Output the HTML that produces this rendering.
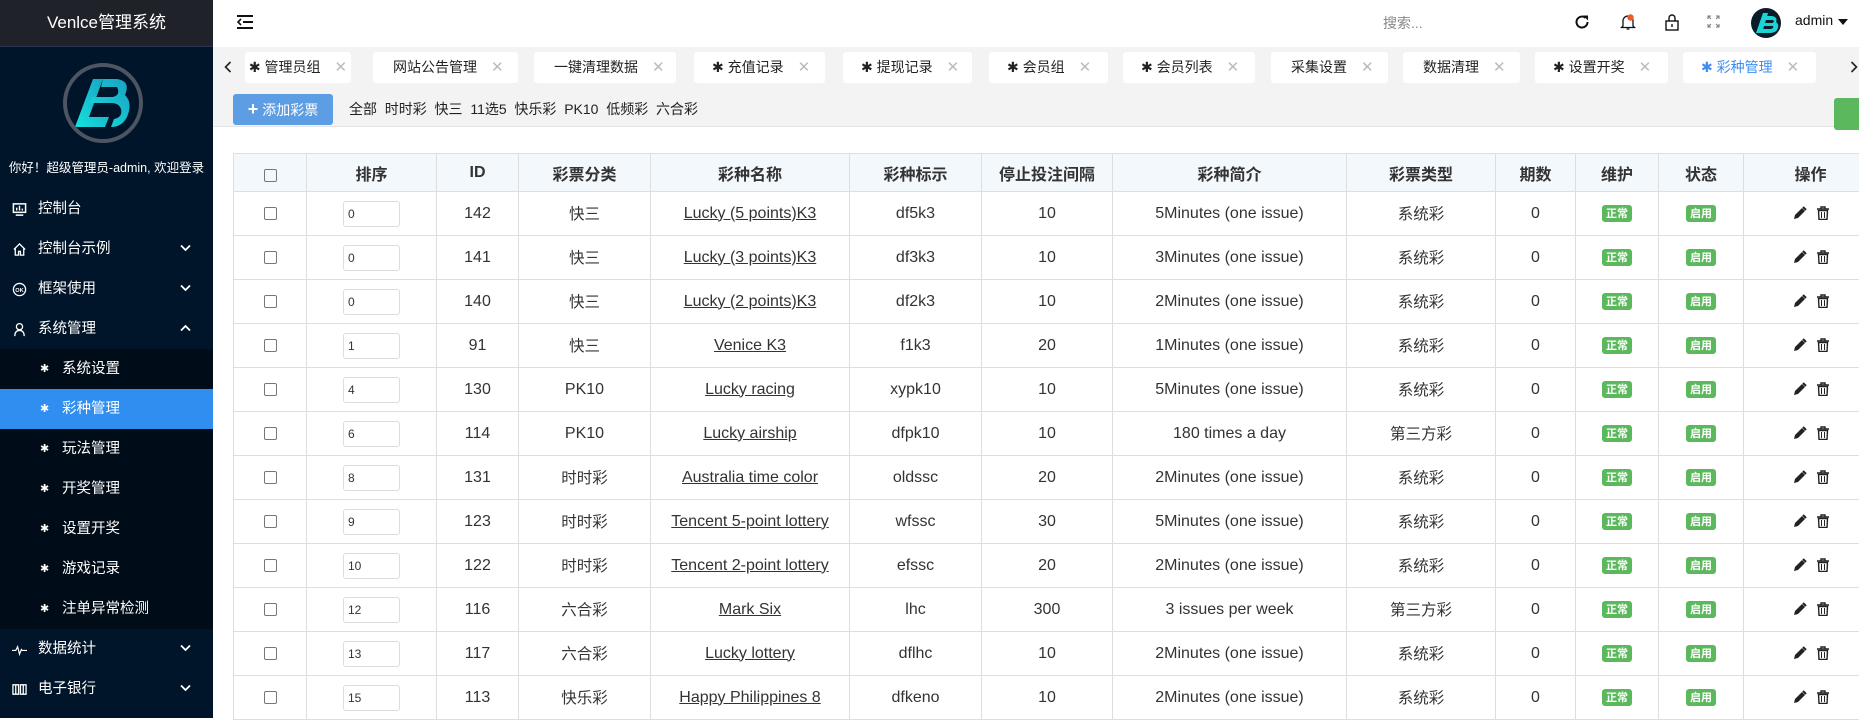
<!DOCTYPE html>
<html><head><meta charset="utf-8">
<style>
*{box-sizing:border-box;margin:0;padding:0}
body{width:1859px;height:718px;overflow:hidden;position:relative;font-family:"Liberation Sans","Noto Sans CJK SC",sans-serif;color:#333;background:#fff}
.side{position:absolute;left:0;top:0;width:213px;height:718px;background:#001529;color:#fff}
.side .hd{height:47px;background:#20222a;border-bottom:1px solid #2b3550;text-align:center;line-height:46px;font-size:17px}
.logo{position:absolute;left:63px;top:63px;width:80px;height:80px;border-radius:50%;border:4px solid #4b5563;background:#001529;overflow:hidden}
.welcome{position:absolute;left:0;width:213px;top:157px;text-align:center;font-size:12.5px}
.menu{position:absolute;top:189px;left:0;width:213px}
.mi{height:40px;line-height:40px;font-size:14.5px;padding-left:38px;position:relative}
.mi .ic{position:absolute;left:12px;top:13px;width:15px;height:15px}
.mi .ar{position:absolute;right:22px;top:15px;width:11px;height:8px}
.sub{background:#000c17}
.si{height:40px;line-height:40px;font-size:14.5px;padding-left:62px;position:relative}
.si:before{content:"✱";position:absolute;left:40px;top:0;font-size:11px}
.si.act{background:#2f8ef0}
.top{position:absolute;left:213px;top:0;right:0;height:47px;background:#fff}
.tabs{position:absolute;left:213px;top:47px;right:0;height:80px;background:#f3f3f3;border-bottom:1px solid #e3e3e3}
.tab{position:absolute;top:5px;height:31px;background:#fff;border-radius:3px;font-size:14px;line-height:31px;color:#222;white-space:nowrap}
.tab .x{color:#bbb;margin-left:14px;font-size:15px}
.btn{position:absolute;left:20px;top:47px;width:100px;height:31px;background:#5d9de3;color:#fff;border-radius:3px;font-size:14px;line-height:31px;text-align:center}
.flt{position:absolute;left:136px;top:47px;line-height:31px;font-size:14px;color:#222}
table{position:absolute;left:233px;top:153px;border-collapse:collapse;table-layout:fixed;width:1644px}
th,td{border:1px solid #dedede;text-align:center;font-size:16px;white-space:nowrap;overflow:hidden}
th{background:#f3f8fd;height:38px;font-weight:bold;color:#333;font-family:"Noto Sans CJK SC",sans-serif}
th.l{font-family:"Liberation Sans",sans-serif}
td{height:44px;color:#333}
td.c{font-family:"Noto Sans CJK SC",sans-serif;font-size:15.5px}
td.c span{position:relative;top:-1px}
td a{color:#333;text-decoration:underline}
.cb{display:inline-block;width:13px;height:13px;border:1px solid #777;border-radius:2px;vertical-align:middle}
.inp{display:inline-block;width:57px;height:26px;border:1px solid #ddd;border-radius:3px;text-align:left;padding-left:4px;font-size:12px;line-height:24px;vertical-align:middle}
.bd{display:inline-block;background:#5cb85c;color:#fff;font-size:11px;font-weight:bold;padding:0 4px;height:17px;line-height:17px;border-radius:3px;vertical-align:middle;font-family:"Noto Sans CJK SC",sans-serif}
</style></head><body>
<div class="side">
 <div class="hd">Venlce管理系统</div>
 <div class="logo"><svg width="72" height="72" viewBox="0 0 72 72"><defs><linearGradient id="g" x1="0" y1="1" x2="1" y2="0"><stop offset="0" stop-color="#14e3e0"/><stop offset="1" stop-color="#1b9fbf"/></linearGradient></defs><path d="M8 60 L26 12 L36 12 L22 50 L42 50 L38 60 Z" fill="url(#g)"/><path d="M22 36 L26 30 L46 30 Q54 28 50 20 L34 20 L36 12 H50 Q64 14 58 28 Q66 36 60 50 Q55 60 44 60 L47 52 Q56 50 54 42 Q52 36 44 36 Z" fill="url(#g)"/></svg></div>
 <div class="welcome">你好！超级管理员-admin, 欢迎登录</div>
 <div class="menu">
  <div class="mi"><svg class="ic" viewBox="0 0 16 16"><rect x="1.5" y="2" width="13" height="9" fill="none" stroke="#fff" stroke-width="1.6"/><path d="M5 9V6M8 9V4M11 9V7M4 14h8" stroke="#fff" stroke-width="1.5"/></svg>控制台</div>
  <div class="mi"><svg class="ic" viewBox="0 0 16 16"><path d="M2 8L8 2l6 6M3.5 7v7h3.5v-4h2v4h3.5V7" fill="none" stroke="#fff" stroke-width="1.4"/></svg>控制台示例<svg class="ar" viewBox="0 0 11 8"><path d="M1 1.5l4.5 4.5 4.5-4.5" fill="none" stroke="#fff" stroke-width="1.8"/></svg></div>
  <div class="mi"><svg class="ic" viewBox="0 0 16 16"><circle cx="8" cy="8" r="6.5" fill="none" stroke="#fff" stroke-width="1.4"/><text x="8" y="10.5" font-size="6" fill="#fff" text-anchor="middle" font-weight="bold" font-family="Liberation Sans">OK</text></svg>框架使用<svg class="ar" viewBox="0 0 11 8"><path d="M1 1.5l4.5 4.5 4.5-4.5" fill="none" stroke="#fff" stroke-width="1.8"/></svg></div>
  <div class="mi"><svg class="ic" viewBox="0 0 16 16"><circle cx="8" cy="5" r="3.3" fill="none" stroke="#fff" stroke-width="1.4"/><path d="M3 15c0-4 2-6 5-6s5 2 5 6" fill="none" stroke="#fff" stroke-width="1.4"/></svg>系统管理<svg class="ar" viewBox="0 0 11 8"><path d="M1 6.5l4.5-4.5 4.5 4.5" fill="none" stroke="#fff" stroke-width="1.8"/></svg></div>
  <div class="sub">
   <div class="si">系统设置</div>
   <div class="si act">彩种管理</div>
   <div class="si">玩法管理</div>
   <div class="si">开奖管理</div>
   <div class="si">设置开奖</div>
   <div class="si">游戏记录</div>
   <div class="si">注单异常检测</div>
  </div>
  <div class="mi"><svg class="ic" viewBox="0 0 16 16"><path d="M0 9h4l2-4 2 8 2-5 1 1h5" fill="none" stroke="#fff" stroke-width="1.3"/></svg>数据统计<svg class="ar" viewBox="0 0 11 8"><path d="M1 1.5l4.5 4.5 4.5-4.5" fill="none" stroke="#fff" stroke-width="1.8"/></svg></div>
  <div class="mi"><svg class="ic" viewBox="0 0 16 16"><path d="M1 3h6v10H1zM9 3h6v10H9zM4 3v10M12 3v10" fill="none" stroke="#fff" stroke-width="1.4"/></svg>电子银行<svg class="ar" viewBox="0 0 11 8"><path d="M1 1.5l4.5 4.5 4.5-4.5" fill="none" stroke="#fff" stroke-width="1.8"/></svg></div>
 </div>
</div>
<div class="top">
 <svg style="position:absolute;left:24px;top:15px" width="16" height="14" viewBox="0 0 16 14"><path d="M0 1h16M6 7h10M0 13h16" stroke="#111" stroke-width="2"/><path d="M4 4L1 7l3 3" fill="none" stroke="#111" stroke-width="1.6"/></svg>
 <div style="position:absolute;left:1170px;top:13px;font-size:14px;color:#888">搜索...</div>
 <svg style="position:absolute;left:1361px;top:14px" width="16" height="16" viewBox="0 0 16 16"><path d="M13.5 8A5.5 5.5 0 1 1 11.5 3.8" fill="none" stroke="#111" stroke-width="2"/><path d="M9 1.5h5v5z" fill="#111"/></svg>
 <svg style="position:absolute;left:1407px;top:13px" width="16" height="18" viewBox="0 0 16 18"><path d="M3 13V8a5 5 0 0 1 10 0v5l1.5 1.5h-13z M6.5 16h3" fill="none" stroke="#111" stroke-width="1.3"/><circle cx="10.5" cy="4.5" r="3.2" fill="#f05a28"/></svg>
 <svg style="position:absolute;left:1451px;top:13px" width="16" height="18" viewBox="0 0 16 18"><rect x="2" y="8" width="12" height="9" fill="none" stroke="#111" stroke-width="1.4"/><path d="M5 8V5a3 3 0 0 1 6 0v3M8 11v3" fill="none" stroke="#111" stroke-width="1.4"/></svg>
 <svg style="position:absolute;left:1494px;top:15px" width="13" height="13" viewBox="0 0 13 13"><path d="M1 4V1h3M9 1h3v3M12 9v3H9M4 12H1V9M1 1l3 3M12 1L9 4M12 12L9 9M1 12l3-3" fill="none" stroke="#777" stroke-width="1"/></svg>
 <div style="position:absolute;left:1538px;top:8px;width:30px;height:30px;border-radius:50%;background:#0a1c2a;overflow:hidden"><svg width="30" height="30" viewBox="0 0 30 30"><path d="M5 25L12 5h5l-6 20zM13 8h8q6 1 4 6q4 3 1 8q-2 3-8 3H10l2-4h8q3-1 2-3H12l1-3h8q3-1 1-3h-9z" fill="#19d6d6"/></svg></div>
 <div style="position:absolute;left:1582px;top:12px;font-size:14px;color:#111">admin</div>
 <div style="position:absolute;left:1625px;top:19px;width:0;height:0;border-left:5px solid transparent;border-right:5px solid transparent;border-top:6px solid #111"></div>
</div>
<div class="tabs">
 <svg style="position:absolute;left:11px;top:14px" width="8" height="12" viewBox="0 0 8 12"><path d="M6.5 1L1.5 6l5 5" fill="none" stroke="#222" stroke-width="1.6"/></svg>
 <div class="tab" style="left:32px;width:106px;padding-left:0">&nbsp;✱ 管理员组<span class="x">✕</span></div>
 <div class="tab" style="left:160px;width:145px;padding-left:20px">网站公告管理<span class="x">✕</span></div>
 <div class="tab" style="left:321px;width:142px;padding-left:20px">一键清理数据<span class="x">✕</span></div>
 <div class="tab" style="left:481px;width:131px;padding-left:18px">✱ 充值记录<span class="x">✕</span></div>
 <div class="tab" style="left:630px;width:129px;padding-left:18px">✱ 提现记录<span class="x">✕</span></div>
 <div class="tab" style="left:776px;width:119px;padding-left:18px">✱ 会员组<span class="x">✕</span></div>
 <div class="tab" style="left:910px;width:132px;padding-left:18px">✱ 会员列表<span class="x">✕</span></div>
 <div class="tab" style="left:1058px;width:117px;padding-left:20px">采集设置<span class="x">✕</span></div>
 <div class="tab" style="left:1190px;width:117px;padding-left:20px">数据清理<span class="x">✕</span></div>
 <div class="tab" style="left:1322px;width:133px;padding-left:18px">✱ 设置开奖<span class="x">✕</span></div>
 <div class="tab" style="left:1470px;width:133px;padding-left:18px;color:#3d8ef0">✱ 彩种管理<span class="x">✕</span></div>
 <svg style="position:absolute;left:1637px;top:14px" width="8" height="12" viewBox="0 0 8 12"><path d="M1.5 1l5 5-5 5" fill="none" stroke="#222" stroke-width="1.6"/></svg>
 <div class="btn"><b style="font-size:18px">+</b> 添加彩票</div>
 <div class="flt">全部 &nbsp;时时彩 &nbsp;快三 &nbsp;11选5 &nbsp;快乐彩 &nbsp;PK10 &nbsp;低频彩 &nbsp;六合彩</div>
 <div style="position:absolute;left:1621px;top:51px;width:40px;height:32px;background:#5cb85c;border-radius:3px"></div>
</div>
<table>
<colgroup><col style="width:73px"><col style="width:130px"><col style="width:82px"><col style="width:132px"><col style="width:199px"><col style="width:132px"><col style="width:131px"><col style="width:234px"><col style="width:149px"><col style="width:80px"><col style="width:83px"><col style="width:85px"><col style="width:134px"></colgroup>
<tr><th><span class="cb"></span></th><th>排序</th><th class="l">ID</th><th>彩票分类</th><th>彩种名称</th><th>彩种标示</th><th>停止投注间隔</th><th>彩种简介</th><th>彩票类型</th><th>期数</th><th>维护</th><th>状态</th><th>操作</th></tr>
</table>
<script>
var rows=[["0","142","快三","Lucky (5 points)K3","df5k3","10","5Minutes (one issue)","系统彩"],
["0","141","快三","Lucky (3 points)K3","df3k3","10","3Minutes (one issue)","系统彩"],
["0","140","快三","Lucky (2 points)K3","df2k3","10","2Minutes (one issue)","系统彩"],
["1","91","快三","Venice K3","f1k3","20","1Minutes (one issue)","系统彩"],
["4","130","PK10","Lucky racing","xypk10","10","5Minutes (one issue)","系统彩"],
["6","114","PK10","Lucky airship","dfpk10","10","180 times a day","第三方彩"],
["8","131","时时彩","Australia time color","oldssc","20","2Minutes (one issue)","系统彩"],
["9","123","时时彩","Tencent 5-point lottery","wfssc","30","5Minutes (one issue)","系统彩"],
["10","122","时时彩","Tencent 2-point lottery","efssc","20","2Minutes (one issue)","系统彩"],
["12","116","六合彩","Mark Six","lhc","300","3 issues per week","第三方彩"],
["13","117","六合彩","Lucky lottery","dflhc","10","2Minutes (one issue)","系统彩"],
["15","113","快乐彩","Happy Philippines 8","dfkeno","10","2Minutes (one issue)","系统彩"]];
var t=document.querySelector("table"),h="";
var pen='<svg width="14" height="14" viewBox="0 0 14 14" style="vertical-align:middle"><path d="M1 13l1-4 7-7 3 3-7 7z" fill="#222"/><path d="M10 1l3 3" stroke="#222" stroke-width="2"/></svg>';
var bin='<svg width="12" height="14" viewBox="0 0 12 14" style="vertical-align:middle;margin-left:10px"><path d="M0 3h12M4 3V1h4v2" stroke="#222" stroke-width="1.4" fill="none"/><path d="M1.5 4.5h9L10 13.5H2z" fill="none" stroke="#222" stroke-width="1.4"/><path d="M4.5 6v6M7.5 6v6" stroke="#222"/></svg>';
rows.forEach(function(r){var cc=/[^\x00-\x7f]/.test(r[2])?' class="c"':'';h+='<tr><td><span class="cb"></span></td><td><span class="inp">'+r[0]+'</span></td><td>'+r[1]+'</td><td'+cc+'><span>'+r[2]+'</span></td><td><a>'+r[3]+'</a></td><td>'+r[4]+'</td><td>'+r[5]+'</td><td>'+r[6]+'</td><td class="c"><span>'+r[7]+'</span></td><td>0</td><td><span class="bd">正常</span></td><td><span class="bd">启用</span></td><td>'+pen+bin+'</td></tr>';});
t.insertAdjacentHTML("beforeend",h);
</script>
</body></html>
